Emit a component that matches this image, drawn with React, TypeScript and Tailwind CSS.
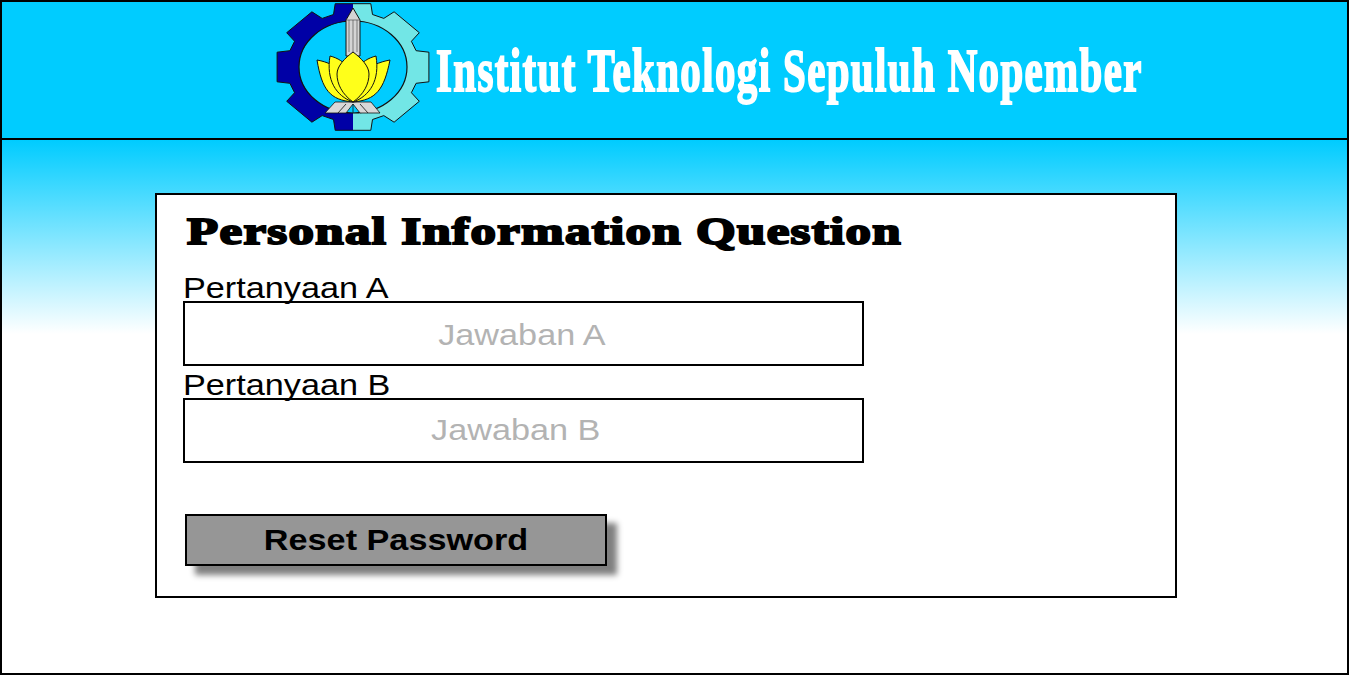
import React from "react";

// 8 tooth gear, elliptical, coords follow a 180x140 box
function gearPath() {
  const cx = 93;
  const cy = 67;
  const pts: string[] = [];
  for (let i = 0; i < 8; i++) {
    const a = (i * Math.PI) / 4 - Math.PI / 2;
    const step = [
      [-0.3, 66, 55],
      [-0.23, 78, 65],
      [0.23, 78, 65],
      [0.3, 66, 55],
    ];
    for (const [d, rx, ry] of step) {
      pts.push(`${(cx + rx * Math.cos(a + d)).toFixed(1)},${(cy + ry * Math.sin(a + d)).toFixed(1)}`);
    }
  }
  return `M${pts.join("L")}Z`;
}

function Logo() {
  const gear = gearPath();
  return (
    <svg viewBox="0 0 180 140" className="h-[140px] w-[180px] shrink-0">
      <defs>
        <clipPath id="leftHalf">
          <rect x="0" y="0" width="93" height="140" />
        </clipPath>
        <clipPath id="rightHalf">
          <rect x="93" y="0" width="87" height="140" />
        </clipPath>
      </defs>
      <path d={gear} fill="#0000a6" clipPath="url(#leftHalf)" />
      <path d={gear} fill="#72e6e6" clipPath="url(#rightHalf)" />
      <path d={gear} fill="none" stroke="#111" strokeWidth="1" />
      <ellipse cx="93" cy="67" rx="54" ry="46" fill="#00ccff" stroke="#111" strokeWidth="1.2" />
      {/* tugu */}
      <path d="M86 56V20L93 8L100 20V56Z" fill="#d4d4d4" stroke="#111" strokeWidth="1" />
      <path d="M89 20V52M93 20V52M97 20V52M86 20H100" stroke="#555" strokeWidth="0.7" fill="none" />
      {/* alas */}
      <path d="M65 113L75 102H111L120 113H100L93 104L86 113Z" fill="#d8d8d8" stroke="#111" strokeWidth="0.8" />
      <path d="M78 113L86 104M108 113L100 104M93 104V113" stroke="#111" strokeWidth="0.8" fill="none" />
      {/* teratai */}
      <path d="M93 102C70 100 62 90 57 60C68 62 76 66 80 72C86 90 90 96 93 102Z" fill="#ffff1a" stroke="#111" strokeWidth="1" />
      <path d="M93 102C116 100 124 90 130 60C119 62 110 66 106 72C100 90 96 96 93 102Z" fill="#ffff1a" stroke="#111" strokeWidth="1" />
      <path d="M93 102C76 96 66 80 70 56C78 58 84 62 88 68C92 84 92 94 93 102Z" fill="#ffff1a" stroke="#111" strokeWidth="1" />
      <path d="M93 102C110 96 120 80 116 56C108 58 102 62 98 68C94 84 94 94 93 102Z" fill="#ffff1a" stroke="#111" strokeWidth="1" />
      <path d="M93 102C82 94 77 84 77 74C77 66 85 58 93 52C101 58 109 66 109 74C109 84 104 94 93 102Z" fill="#ffff1a" stroke="#111" strokeWidth="1" />
    </svg>
  );
}

function Field({ label, placeholder, nudge }: { label: string; placeholder: string; nudge: string }) {
  return (
    <div className="flex flex-col">
      <span className="block h-[29px] origin-left scale-x-[1.18] whitespace-nowrap text-[29px] leading-[33px] text-black">
        {label}
      </span>
      <div className={`flex h-[65px] w-[681px] items-center justify-center border-2 border-black bg-white ${nudge}`}>
        <span className="scale-x-[1.18] text-[29px] leading-none text-[#b3b3b3]">{placeholder}</span>
      </div>
    </div>
  );
}

export default function App() {
  return (
    <div className="flex h-[675px] w-[1349px] flex-col overflow-hidden border-2 border-black bg-white font-['Liberation_Sans',Arial,sans-serif]">
      <header className="flex h-[138px] shrink-0 items-center border-b-2 border-black bg-[#00ccff] pl-[258px]">
        <Logo />
        <h1 className="ml-[-4px] origin-left scale-x-[0.66] whitespace-nowrap font-['Liberation_Serif',serif] text-[62px] font-bold leading-none tracking-[2.1px] text-white [-webkit-text-stroke:2px_white]">
          Institut Teknologi Sepuluh Nopember
        </h1>
      </header>

      <main className="flex-1 bg-[linear-gradient(#00ccff_0px,#ffffff_194px)] pl-[153px] pt-[53px]">
        <div className="h-[405px] w-[1022px] border-2 border-black bg-white pl-[26px]">
          <h2 className="ml-[4px] mt-[14px] origin-left scale-x-[1.34] whitespace-nowrap font-['Liberation_Serif',serif] text-[38px] font-bold leading-[44px] tracking-[1px] text-black [-webkit-text-stroke:2px_black]">
            Personal Information Question
          </h2>
          <div className="mt-[19px] flex flex-col gap-[3px]">
            <Field label="Pertanyaan A" placeholder="Jawaban A" nudge="pr-[3px] pt-[3px]" />
            <Field label="Pertanyaan B" placeholder="Jawaban B" nudge="pr-[16px]" />
          </div>
          <button className="ml-[2px] mt-[51px] h-[52px] w-[422px] border-2 border-black bg-[#969696] pt-[2px] text-[29px] font-bold text-black shadow-[10px_9px_6px_#808080]">
            <span className="inline-block scale-x-[1.18]">Reset Password</span>
          </button>
        </div>
      </main>
    </div>
  );
}
